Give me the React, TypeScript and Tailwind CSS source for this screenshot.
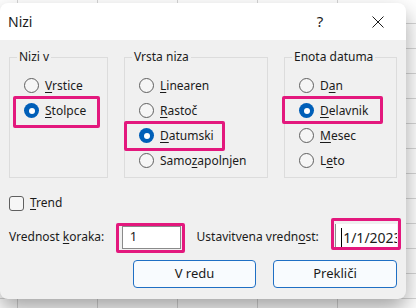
import { useState } from "react";

const Key = ({ text, k }: { text: string; k: number }) => (
  <span>
    {text.slice(0, k)}
    <span className="underline underline-offset-[2px] decoration-[1px]">{text[k]}</span>
    {text.slice(k + 1)}
  </span>
);

const RadioDot = ({ checked }: { checked: boolean }) =>
  checked ? (
    <span className="flex h-[15px] w-[15px] shrink-0 items-center justify-center rounded-full bg-[#005fb8]">
      <span className="h-[6px] w-[6px] rounded-full bg-white" />
    </span>
  ) : (
    <span className="h-[15px] w-[15px] shrink-0 rounded-full border border-[#5f5f5f] bg-[#f6f6f6]" />
  );

type Option = { text: string; k: number };

const Group = ({
  title,
  width,
  options,
  value,
  onPick,
}: {
  title: string;
  width: string;
  options: Option[];
  value: string;
  onPick: (v: string) => void;
}) => (
  <fieldset className={`${width} h-[129px] shrink-0 border border-[#dcdcdc] pt-[8px]`}>
    <legend className="ml-[7px] px-[2px] leading-[16px]">{title}</legend>
    <div className="flex flex-col pl-[14px]">
      {options.map((o) => (
        <button
          key={o.text}
          onClick={() => onPick(o.text)}
          className="flex h-[25px] items-center gap-[6px] text-left"
        >
          <RadioDot checked={value === o.text} />
          <Key text={o.text} k={o.k} />
        </button>
      ))}
    </div>
  </fieldset>
);

const Mark = ({ className }: { className: string }) => (
  <div className={`pointer-events-none absolute rounded-[2px] border-[3px] border-[#e3187d] ${className}`} />
);

export default function App() {
  const [series, setSeries] = useState("Stolpce");
  const [type, setType] = useState("Datumski");
  const [unit, setUnit] = useState("Delavnik");
  const [trend, setTrend] = useState(false);

  return (
    <div className="h-[308px] w-[416px] overflow-hidden bg-white bg-[linear-gradient(to_right,#d6d6d6_1px,transparent_1px),linear-gradient(to_bottom,#d6d6d6_1px,transparent_1px)] bg-size-[80px_25px] bg-position-[17px_23px] pt-[3px] font-['Noto_Sans',sans-serif] text-[12px] text-[#1b1b1b]">
      <div className="relative flex h-[296px] w-[406px] flex-col overflow-hidden rounded-[8px] bg-[#f0f0f0] shadow-[0_10px_22px_rgba(0,0,0,0.36)]">
        {/* title bar */}
        <div className="flex h-[37px] shrink-0 items-center bg-white pl-[8px]">
          <span className="text-[14px]">Nizi</span>
          <div className="ml-auto mr-[5px] flex items-center gap-[12px]">
            <span className="flex w-[46px] justify-center text-[15px]">?</span>
            <span className="flex w-[46px] justify-center">
              <svg width="12" height="12" viewBox="0 0 12 12" fill="none" stroke="#1b1b1b" strokeWidth="1">
                <path d="M0.5 0.5 L11.5 11.5 M11.5 0.5 L0.5 11.5" />
              </svg>
            </span>
          </div>
        </div>

        {/* body */}
        <div className="flex flex-1 flex-col px-[9px] pt-[9px]">
          <div className="flex gap-[16px]">
            <Group
              title="Nizi v"
              width="w-[99px]"
              options={[
                { text: "Vrstice", k: 0 },
                { text: "Stolpce", k: 0 },
              ]}
              value={series}
              onPick={setSeries}
            />
            <Group
              title="Vrsta niza"
              width="w-[144px]"
              options={[
                { text: "Linearen", k: 0 },
                { text: "Rastoč", k: 0 },
                { text: "Datumski", k: 0 },
                { text: "Samozapolnjen", k: 4 },
              ]}
              value={type}
              onPick={setType}
            />
            <Group
              title="Enota datuma"
              width="w-[113px]"
              options={[
                { text: "Dan", k: 1 },
                { text: "Delavnik", k: 0 },
                { text: "Mesec", k: 0 },
                { text: "Leto", k: 1 },
              ]}
              value={unit}
              onPick={setUnit}
            />
          </div>

          <button
            onClick={() => setTrend(!trend)}
            className="mt-[15px] flex h-[20px] items-center gap-[6px] self-start"
          >
            <span className="flex h-[15px] w-[15px] items-center justify-center rounded-[3px] border border-[#5f5f5f] bg-[#f6f6f6] text-[10px]">
              {trend ? "✓" : ""}
            </span>
            <Key text="Trend" k={0} />
          </button>

          <div className="mt-[11px] flex h-[26px] items-center">
            <span className="w-[113px]">
              Vrednost <Key text="koraka" k={0} />:
            </span>
            <div className="flex h-[23px] w-[59px] items-center border border-[#8a8a8a] bg-white pl-[7px] text-[13px]">
              1
            </div>
            <span className="ml-[16px] w-[139px]">
              Ustavitvena <Key text="vrednost" k={5} />:
            </span>
            <div className="flex h-[26px] w-[62px] items-center overflow-hidden whitespace-nowrap border-l border-[#8a8a8a] bg-white pl-[5px] text-[14px]">
              <span className="mr-[1px] h-[19px] w-[1px] shrink-0 bg-black" />
              1/1/2023
            </div>
          </div>

          <div className="mt-[10px] flex gap-[17px] pl-[124px]">
            <button className="h-[28px] w-[123px] rounded-[4px] border border-[#1f6fc4] bg-[#f8fbfe] text-[13px]">
              V redu
            </button>
            <button className="h-[28px] w-[124px] rounded-[4px] border border-[#1f6fc4] bg-[#f8fbfe] text-[13px]">
              Prekliči
            </button>
          </div>
        </div>

        {/* highlight marks */}
        <Mark className="left-[13px] top-[93px] h-[32px] w-[87px]" />
        <Mark className="left-[124px] top-[118px] h-[30px] w-[101px]" />
        <Mark className="left-[282px] top-[93px] h-[28px] w-[101px]" />
        <Mark className="left-[116px] top-[220px] h-[30px] w-[69px]" />
        <Mark className="left-[331px] top-[215px] h-[32px] w-[70px]" />
      </div>
    </div>
  );
}
